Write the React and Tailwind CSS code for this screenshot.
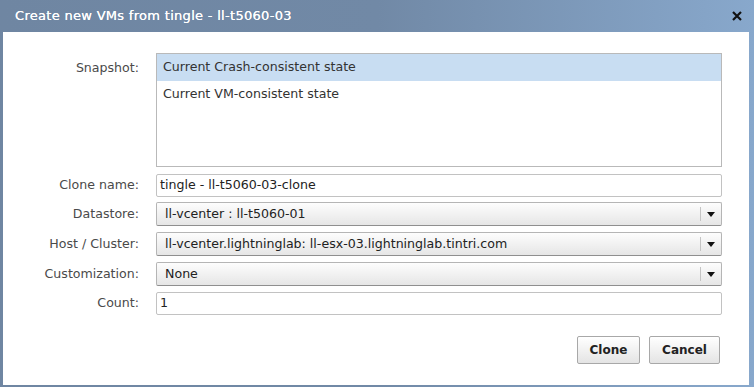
const font = { fontFamily: '"DejaVu Sans", Verdana, sans-serif' };

function Label({ children }) {
  return (
    <div className="w-[136px] shrink-0 text-right text-[12.6px] text-[#4a4a4a]">
      {children}
    </div>
  );
}

function Select({ value }) {
  return (
    <div className="flex h-[24px] w-[566px] items-center rounded-[2px] border border-[#b5b5b5] border-b-[#8f8f8f] bg-gradient-to-b from-[#fdfdfd] to-[#e6e6e6]">
      <div className="flex-1 pl-[8px] text-[12.6px] text-[#222]">{value}</div>
      <div className="h-[14px] w-px bg-[#c4c4c4]" />
      <div className="flex w-[20px] justify-center">
        <svg width="8" height="5" viewBox="0 0 8 5">
          <path d="M0 0h8L4 5z" fill="#111" />
        </svg>
      </div>
    </div>
  );
}

function Input({ value }) {
  return (
    <div className="flex h-[23px] w-[566px] items-center rounded-[2px] border border-[#c2c2c2] bg-white pl-[3px] text-[12.6px] text-[#222]">
      {value}
    </div>
  );
}

export default function App() {
  return (
    <div
      className="flex h-[387px] w-[754px] flex-col bg-gradient-to-r from-[#6f86a2] via-[#7189a6] to-[#88a8cc]"
      style={font}
    >
      {/* title bar */}
      <div className="flex h-[32px] shrink-0 items-center justify-between pl-[15px] pr-[12px]">
        <span className="text-[13px] tracking-[0.3px] text-white [text-shadow:0_0_0.4px_#fff]">
          Create new VMs from tingle - ll-t5060-03
        </span>
        <svg width="10" height="10" viewBox="0 0 10 10">
          <path d="M1 1l8 8M9 1l-8 8" stroke="#111" strokeWidth="2.2" />
        </svg>
      </div>

      {/* body */}
      <div className="mb-[2px] ml-[3px] mr-[5px] flex flex-1 flex-col bg-white pt-[21px]">
        <div className="flex">
          <Label>
            <div className="pt-[6px]">Snapshot:</div>
          </Label>
          <div className="ml-[17px] h-[114px] w-[566px] border border-[#b9b9b9] bg-white text-[12.6px] text-[#333]">
            <div className="flex h-[27px] items-center bg-[#c8ddf2] pl-[6px]">
              Current Crash-consistent state
            </div>
            <div className="flex h-[27px] items-center pl-[6px]">
              Current VM-consistent state
            </div>
          </div>
        </div>

        <div className="mt-[7px] flex items-center">
          <Label>Clone name:</Label>
          <div className="ml-[17px]">
            <Input value="tingle - ll-t5060-03-clone" />
          </div>
        </div>

        <div className="mt-[5px] flex items-center">
          <Label>Datastore:</Label>
          <div className="ml-[17px]">
            <Select value="ll-vcenter : ll-t5060-01" />
          </div>
        </div>

        <div className="mt-[6px] flex items-center">
          <Label>Host / Cluster:</Label>
          <div className="ml-[17px]">
            <Select value="ll-vcenter.lightninglab: ll-esx-03.lightninglab.tintri.com" />
          </div>
        </div>

        <div className="mt-[6px] flex items-center">
          <Label>Customization:</Label>
          <div className="ml-[17px]">
            <Select value="None" />
          </div>
        </div>

        <div className="mt-[6px] flex items-center">
          <Label>Count:</Label>
          <div className="ml-[17px]">
            <Input value="1" />
          </div>
        </div>

        <div className="mt-[21px] flex justify-end gap-[9px] pr-[29px]">
          <button className="h-[28px] w-[63px] rounded-[2px] border border-[#a8a8a8] bg-gradient-to-b from-[#ffffff] to-[#e4e4e4] text-[12px] font-bold text-[#222]">
            Clone
          </button>
          <button className="h-[28px] w-[71px] rounded-[2px] border border-[#a8a8a8] bg-gradient-to-b from-[#ffffff] to-[#e4e4e4] text-[12px] font-bold text-[#222]">
            Cancel
          </button>
        </div>
      </div>
    </div>
  );
}
